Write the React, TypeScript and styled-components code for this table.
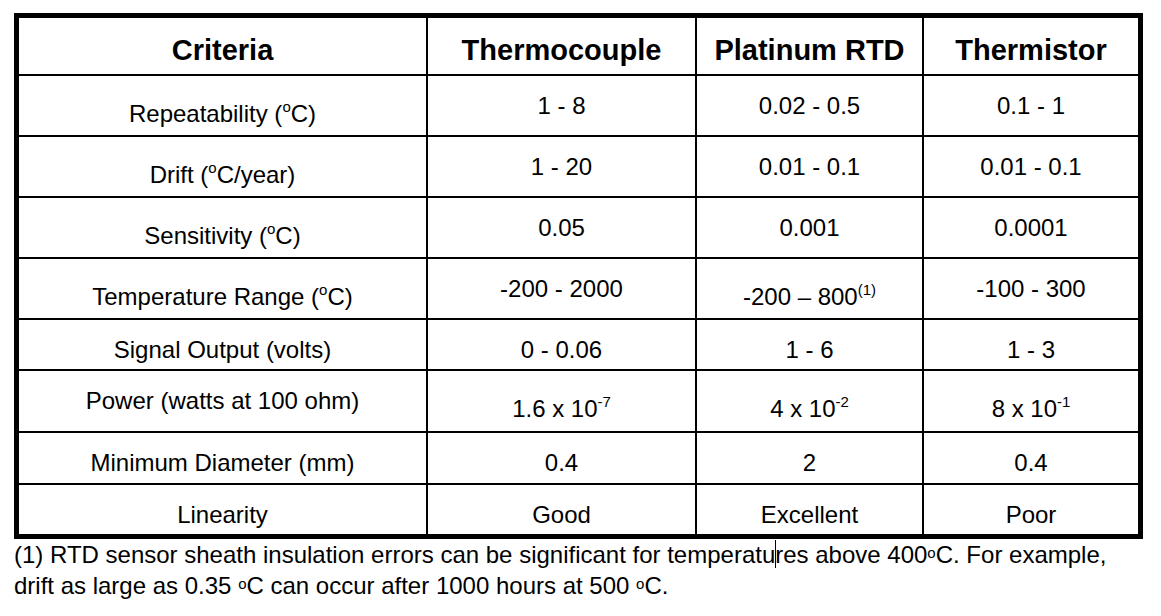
import React from "react";
import styled, { createGlobalStyle } from "styled-components";

const Global = createGlobalStyle`
  html, body { margin: 0; padding: 0; background: #ffffff; }
  body { font-family: "Liberation Sans", Arial, sans-serif; color: #000; }
`;

const Page = styled.div`
  padding: 13px 0 0 14px;
  width: 1129px;
`;

const Grid = styled.div`
  display: grid;
  grid-template-columns: 407px 267px 225px 214px;
  grid-template-rows: 56px 59px 59px 59px 59px 49px 60px 50px 49px;
  gap: 2px;
  background: #000;
  border: 5px solid #000;
`;

const Cell = styled.div<{ $head?: boolean; $raised?: boolean }>`
  background: #fff;
  text-align: center;
  font-size: ${(p) => (p.$head ? "29px" : "24px")};
  font-weight: ${(p) => (p.$head ? 700 : 400)};
  line-height: ${(p) => (p.$head ? "32px" : "28px")};
  padding-top: ${(p) => (p.$raised ? 24 : 16)}px;
  white-space: nowrap;
`;

const Sup = styled.span`
  font-size: 15px;
  line-height: 0;
  vertical-align: 10px;
`;

const SmallO = styled.span`
  font-size: 15px;
  line-height: 0;
  vertical-align: 5px;
`;

const Note = styled.div`
  font-size: 24px;
  line-height: 31px;
  white-space: nowrap;
`;

const Caret = styled.span`
  display: inline-block;
  width: 0;
  height: 28px;
  border-left: 1px solid #000;
  vertical-align: -5px;
  margin-right: -1px;
`;

type Row = { label: React.ReactNode; vals: React.ReactNode[]; raised: boolean[] };

const deg = <Sup>o</Sup>;

const rows: Row[] = [
  { label: <>Repeatability ({deg}C)</>, vals: ["1 - 8", "0.02 - 0.5", "0.1 - 1"], raised: [true, false, false, false] },
  { label: <>Drift ({deg}C/year)</>, vals: ["1 - 20", "0.01 - 0.1", "0.01 - 0.1"], raised: [true, false, false, false] },
  { label: <>Sensitivity ({deg}C)</>, vals: ["0.05", "0.001", "0.0001"], raised: [true, false, false, false] },
  {
    label: <>Temperature Range ({deg}C)</>,
    vals: ["-200 - 2000", <>-200 – 800<Sup>(1)</Sup></>, "-100 - 300"],
    raised: [true, false, true, false],
  },
  { label: "Signal Output (volts)", vals: ["0 - 0.06", "1 - 6", "1 - 3"], raised: [false, false, false, false] },
  {
    label: "Power (watts at 100 ohm)",
    vals: [<>1.6 x 10<Sup>-7</Sup></>, <>4 x 10<Sup>-2</Sup></>, <>8 x 10<Sup>-1</Sup></>],
    raised: [false, true, true, true],
  },
  { label: "Minimum Diameter (mm)", vals: ["0.4", "2", "0.4"], raised: [false, false, false, false] },
  { label: "Linearity", vals: ["Good", "Excellent", "Poor"], raised: [false, false, false, false] },
];

export default function App() {
  return (
    <Page>
      <Global />
      <Grid>
        {["Criteria", "Thermocouple", "Platinum RTD", "Thermistor"].map((h) => (
          <Cell key={h} $head>
            {h}
          </Cell>
        ))}
        {rows.map((r, i) => (
          <React.Fragment key={i}>
            <Cell $raised={r.raised[0]}>{r.label}</Cell>
            {r.vals.map((v, j) => (
              <Cell key={j} $raised={r.raised[j + 1]}>
                {v}
              </Cell>
            ))}
          </React.Fragment>
        ))}
      </Grid>
      <Note>
        (1) RTD sensor sheath insulation errors can be significant for temperatu<Caret />res above 400<SmallO>o</SmallO>C. For example,
      </Note>
      <Note>
        drift as large as 0.35 <SmallO>o</SmallO>C can occur after 1000 hours at 500 <SmallO>o</SmallO>C.
      </Note>
    </Page>
  );
}
